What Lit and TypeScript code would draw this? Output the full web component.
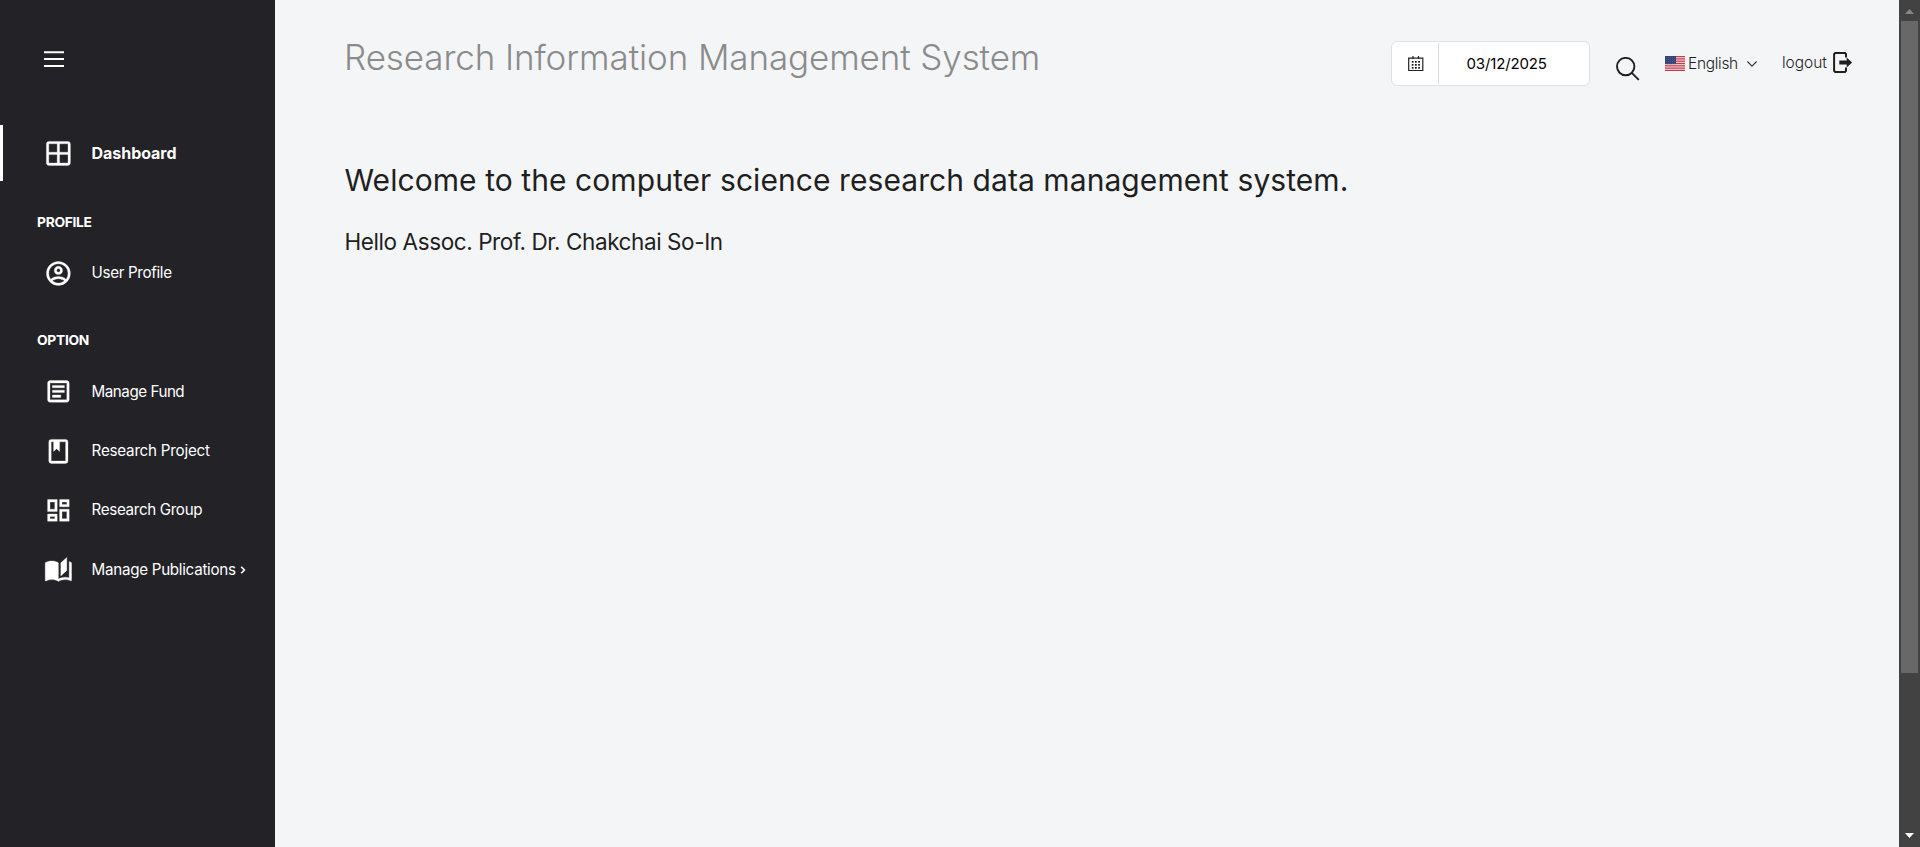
import { LitElement, html, css, svg } from "lit";
import { customElement } from "lit/decorators.js";

interface NavItem {
  label: string;
  icon: string;
  cls: string;
  more?: boolean;
}

const ICONS: Record<string, string> = {
  grid: "M4,2H20A2,2 0 0,1 22,4V20A2,2 0 0,1 20,22H4C2.92,22 2,21.1 2,20V4A2,2 0 0,1 4,2M4,4V11H11V4H4M4,20H11V13H4V20M20,20V13H13V20H20M20,4H13V11H20V4Z",
  account:
    "M12,2A10,10 0 0,0 2,12A10,10 0 0,0 12,22A10,10 0 0,0 22,12A10,10 0 0,0 12,2M7.07,18.28C7.5,17.38 10.12,16.5 12,16.5C13.88,16.5 16.5,17.38 16.93,18.28C15.57,19.36 13.86,20 12,20C10.14,20 8.43,19.36 7.07,18.28M18.36,16.83C16.93,15.09 13.46,14.5 12,14.5C10.54,14.5 7.07,15.09 5.64,16.83C4.62,15.5 4,13.82 4,12C4,7.59 7.59,4 12,4C16.41,4 20,7.59 20,12C20,13.82 19.38,15.5 18.36,16.83M12,6C10.06,6 8.5,7.56 8.5,9.5C8.5,11.44 10.06,13 12,13C13.94,13 15.5,11.44 15.5,9.5C15.5,7.56 13.94,6 12,6M12,11A1.5,1.5 0 0,1 10.5,9.5A1.5,1.5 0 0,1 12,8A1.5,1.5 0 0,1 13.5,9.5A1.5,1.5 0 0,1 12,11Z",
  fund: "M5,3C3.89,3 3,3.89 3,5V19C3,20.11 3.89,21 5,21H19C20.11,21 21,20.11 21,19V5C21,3.89 20.11,3 19,3H5M5,5H19V19H5V5M7,7V9H17V7H7M7,11V13H17V11H7M7,15V17H14V15H7Z",
  book: "M18,2A2,2 0 0,1 20,4V20A2,2 0 0,1 18,22H6A2,2 0 0,1 4,20V4A2,2 0 0,1 6,2H18M18,4H13V12L10.5,9.75L8,12V4H6V20H18V4Z",
  group:
    "M19,5V7H15V5H19M9,5V11H5V5H9M19,13V19H15V13H19M9,17V19H5V17H9M21,3H13V9H21V3M11,3H3V13H11V3M21,11H13V21H21V11M11,15H3V21H11V15Z",
  pages:
    "M19 2L14 6.5V17.5L19 13V2M6.5 5C4.55 5 2.45 5.4 1 6.5V21.16C1 21.41 1.25 21.66 1.5 21.66C1.6 21.66 1.65 21.59 1.75 21.59C3.1 20.94 5.05 20.5 6.5 20.5C8.45 20.5 10.55 20.9 12 22C13.35 21.15 15.8 20.5 17.5 20.5C19.15 20.5 20.85 20.81 22.25 21.56C22.35 21.61 22.4 21.59 22.5 21.59C22.75 21.59 23 21.34 23 21.09V6.5C22.4 6.05 21.75 5.75 21 5.5V19C19.9 18.65 18.7 18.5 17.5 18.5C15.8 18.5 13.35 19.15 12 20V6.5C10.55 5.4 8.45 5 6.5 5Z",
};

@customElement("side-nav")
class SideNav extends LitElement {
  static styles = css`
    :host { display: flex; flex-direction: column; width: 275px; background: #222227; color: #fff; }
    .toggle { height: 125px; padding: 51px 0 0 44px; box-sizing: border-box; }
    .toggle svg { display: block; }
    .item { display: flex; align-items: center; height: 56px; margin-bottom: 3.3px; padding-left: 40.6px; border-left: 3px solid transparent; font-size: 15.2px; line-height: 20px; }
    .item.active { border-left-color: #fff; font-size: 16px; font-weight: 700; margin-bottom: 0; }
    .item svg.ic { width: 28.8px; height: 28.8px; margin: 0 19.2px 0 0; flex: none; fill: #fff; stroke: #fff; stroke-width: 0.25; }
    .label { white-space: nowrap; letter-spacing: -0.5px; }
    .grid { letter-spacing: -0.05px; }
    .account { letter-spacing: -0.35px; }
    .book { letter-spacing: -0.23px; }
    .group { letter-spacing: -0.35px; }
    .pages { letter-spacing: -0.29px; }
    .fund { letter-spacing: -0.48px; }
    .chev { margin-left: 4px; }
    .section { height: 64px; box-sizing: border-box; padding: 31px 0 0 37px; font-size: 13.8px; line-height: 20px; font-weight: 700; letter-spacing: -0.3px; }
    .section.second { height: 59.5px; padding-top: 26px; }
  `;
  private item(i: NavItem) {
    return html`<div class="item ${i.cls}">
      <svg class="ic" viewBox="0 0 24 24"><path d=${ICONS[i.icon]} /></svg>
      <span class="label ${i.icon}">${i.label}</span>
      ${i.more
        ? html`<svg class="chev" width="6" height="8" viewBox="0 0 6 8"><path d="M1.2 .8 4.4 4 1.2 7.2" fill="none" stroke="#fff" stroke-width="1.6" /></svg>`
        : ""}
    </div>`;
  }
  render() {
    return html`
      <div class="toggle">
        <svg width="20" height="16" viewBox="0 0 20 16" fill="#fff"><path d="M0 .3h20v2H0zM0 7h20v2H0zM0 14h20v2H0z" /></svg>
      </div>
      ${this.item({ label: "Dashboard", icon: "grid", cls: "active" })}
      <div class="section">PROFILE</div>
      ${this.item({ label: "User Profile", icon: "account", cls: "" })}
      <div class="section second">OPTION</div>
      ${[
        { label: "Manage Fund", icon: "fund", cls: "" },
        { label: "Research Project", icon: "book", cls: "" },
        { label: "Research Group", icon: "group", cls: "" },
        { label: "Manage Publications", icon: "pages", cls: "", more: true },
      ].map((i) => this.item(i))}
    `;
  }
}

@customElement("top-bar")
class TopBar extends LitElement {
  static styles = css`
    :host { display: flex; align-items: flex-start; height: 125px; padding-left: 69px; box-sizing: border-box; }
    svg { display: block; flex: none; }
    .title { margin: 34px 0 0; width: 1047px; font-size: 35px; line-height: 46px; font-weight: 350; color: #8b8b8b; letter-spacing: -0.11px; white-space: nowrap; }
    .date { display: flex; width: 199px; height: 45px; margin-top: 41px; box-sizing: border-box; border: 1px solid #dee2e6; border-radius: 6px; background: #fff; }
    .cal { display: flex; align-items: center; justify-content: center; width: 47px; margin: 1px 0; padding-left: 1px; box-sizing: border-box; border-right: 1px solid #dcdcdc; }
    .value { padding-left: 27.5px; font-size: 15px; line-height: 43px; color: #000; letter-spacing: -0.15px; }
    .search { margin: 57px 0 0 26px; }
    .lang { display: flex; align-items: center; height: 24px; margin: 52px 0 0 25px; width: 117px; font-size: 15.5px; font-weight: 300; color: #1f1f1f; }
    .lang svg:first-child { margin-top: -1px; }
    .lang span { margin: -1px 9px 0 3px; width: 50px; letter-spacing: -0.3px; white-space: nowrap; }
    .out { display: flex; align-items: center; height: 24px; margin-top: 50px; font-size: 15.5px; font-weight: 300; color: #1f1f1f; }
    .out span { width: 51px; letter-spacing: -0.05px; }
  `;
  render() {
    const dots = [5, 8, 11].flatMap((y) => [4, 7.2, 10.4].map((x) => svg`<rect x=${x - 0.2} y=${y} width="1.7" height="1.7" fill="#111" />`));
    const stripes = [0, 2, 4, 6, 8, 10, 12].map((n) => svg`<rect y=${(n * 15) / 13} width="20" height="1.154" fill="#c33a4b" />`);
    const stars = [1, 3, 5, 7].flatMap((y) => [1, 3, 5, 7, 9].map((x) => svg`<rect x=${x} y=${y} width=".7" height=".7" fill="#6f79a5" />`));
    return html`
      <h1 class="title">Research Information Management System</h1>
      <div class="date">
        <div class="cal">
          <svg width="16" height="16" viewBox="0 0 16 16">
            <path d="M.7 2.2h14.1v12.3H.7zM5 0v3M10.5 0v3" fill="none" stroke="#222" stroke-width="1.2" />${dots}
          </svg>
        </div>
        <div class="value">03/12/2025</div>
      </div>
      <svg class="search" width="24" height="24" viewBox="0 0 24 24" fill="none" stroke="#1f1f1f" stroke-width="1.9"><circle cx="9.7" cy="9.6" r="8.7" /><path d="M15.8 15.8l7 7" /></svg>
      <div class="lang">
        <svg width="20" height="15" viewBox="0 0 20 15"><rect width="20" height="15" fill="#f1d3d7" />${stripes}<rect width="11" height="8.1" fill="#344375" />${stars}</svg>
        <span>English</span>
        <svg width="10" height="6" viewBox="0 0 10 6" fill="none" stroke="#333" stroke-width="1.1"><path d="M.4.5 5 5.1 9.6.5" /></svg>
      </div>
      <div class="out">
        <span>logout</span>
        <svg width="20" height="21" viewBox="0 0 20 21" fill="#1f1f1f">
          <path d="M13 5.6V2.2L12 1.1H2.2L1.1 2.2v16.6l1.1 1.1H12l1-1.1v-3.4" fill="none" stroke="#1f1f1f" stroke-width="2" />
          <path d="M6.3 8.6h7.4V5.6l5.4 4.9-5.4 4.9v-3H6.3z" />
        </svg>
      </div>
    `;
  }
}

@customElement("app-root")
class AppRoot extends LitElement {
  static styles = css`
    :host { display: flex; height: 847px; overflow: hidden; background: #f4f5f7; color: #1f1f1f; font-family: Inter, "Noto Sans", sans-serif; }
    .main { flex: 1; min-width: 0; }
    .content { padding: 35px 0 0 69.5px; white-space: nowrap; }
    .welcome { margin: 0; font-size: 30px; line-height: 40px; font-weight: 400; letter-spacing: 0.07px; }
    .hello { margin: 26px 0 0; font-size: 22.5px; line-height: 32px; font-weight: 400; letter-spacing: -0.41px; }
    .scroll { display: flex; flex-direction: column; align-items: center; justify-content: space-between; width: 21px; background: #424242; }
    .scroll svg { display: block; }
    .up { margin-top: 9px; }
    .down { margin-bottom: 9px; }
    .thumb { width: 17px; height: 652px; margin: 7px 0 auto; background: #686868; }
  `;
  render() {
    return html`
      <side-nav></side-nav>
      <div class="main">
        <top-bar></top-bar>
        <div class="content">
          <h3 class="welcome">Welcome to the computer science research data management system.</h3>
          <h4 class="hello">Hello Assoc. Prof. Dr. Chakchai So-In</h4>
        </div>
      </div>
      <div class="scroll">
        <svg class="up" width="9" height="5" viewBox="0 0 9 5"><path d="M4.5 0 9 5H0z" fill="#868686" /></svg>
        <div class="thumb"></div>
        <svg class="down" width="9" height="5" viewBox="0 0 9 5"><path d="M0 0h9L4.5 5z" fill="#fff" /></svg>
      </div>
    `;
  }
}
